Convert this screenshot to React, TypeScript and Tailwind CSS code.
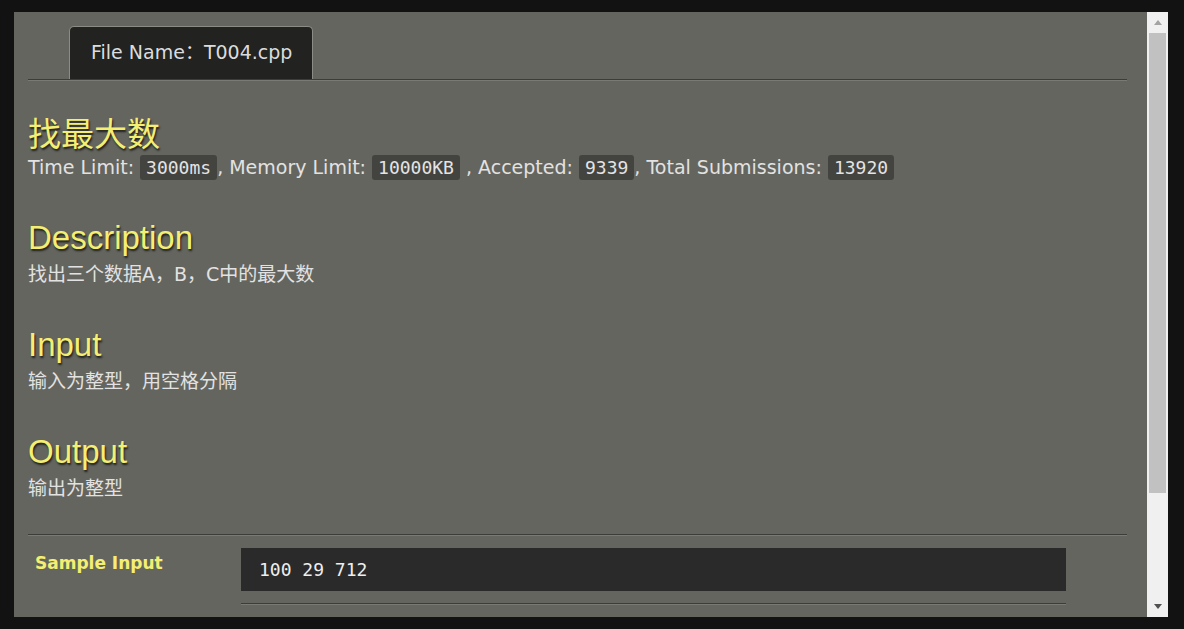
import React from "react"

const sans = "font-['DejaVu_Sans','Noto_Sans_CJK_SC',sans-serif]"
const mono = "font-['DejaVu_Sans_Mono','Liberation_Mono',monospace]"
const heading =
  "text-[33px] leading-[44px] text-[#f4ef72] [text-shadow:1px_2px_2px_#1e1e1e]"

function Code({ children }: { children: React.ReactNode }) {
  return (
    <code className={`${mono} rounded-[3px] bg-[#434340] px-[6px] py-[2px] text-[18px] text-[#e4e4e4]`}>
      {children}
    </code>
  )
}

function Section({ title, text }: { title: string; text: string }) {
  return (
    <div className="mt-[35px]">
      <h2 className={`${heading} font-['Liberation_Sans',sans-serif]`}>{title}</h2>
      <p className={`${sans} text-[19px] leading-[28px] text-[#e2e2e2]`}>{text}</p>
    </div>
  )
}

export default function App() {
  return (
    <div className="flex h-[629px] w-[1184px] bg-[#121212] pb-[12px] pl-[14px] pr-[16px] pt-[12px]">
      <div className="flex-1 overflow-hidden bg-[#65655f] pl-[14px] pr-[20px] pt-[14px]">
        <div className="border-b border-b-[#3c3c3a] shadow-[0_1px_0_#7a7a74]">
          <div
            className={`${sans} ml-[41px] flex h-[53px] w-[244px] items-center rounded-t-[5px] border border-b-0 border-[#8c8c86] bg-[#222221] pb-[1px] pl-[21px] text-[19px] text-[#dcdcdc]`}
          >
            File Name：T004.cpp
          </div>
        </div>

        <div className="mt-[30px]">
          <h1 className={`${heading} font-['Noto_Sans_CJK_SC',sans-serif]`}>找最大数</h1>
          <p className={`${sans} text-[19px] leading-[26px] text-[#e2e2e2]`}>
            Time Limit: <Code>3000ms</Code>, Memory Limit: <Code>10000KB</Code> , Accepted: <Code>9339</Code>, Total
            Submissions: <Code>13920</Code>
          </p>
        </div>

        <div className="mt-[1px]">
          <Section title="Description" text="找出三个数据A，B，C中的最大数" />
          <Section title="Input" text="输入为整型，用空格分隔" />
          <Section title="Output" text="输出为整型" />
        </div>

        <div className="mt-[32px] border-t border-t-[#3c3c3a] shadow-[inset_0_1px_0_#7a7a74]">
          <div className="flex pt-[13px]">
            <div className="w-[213px] pl-[7px] pt-[3px]">
              <span className={`${sans} text-[17px] font-bold text-[#f4ef72]`}>Sample Input</span>
            </div>
            <div className="w-[825px]">
              <pre className={`${mono} h-[43px] bg-[#2a2a2b] px-[18px] pt-[8px] text-[18px] text-[#eeeeee]`}>
                100 29 712
              </pre>
              <div className="mt-[12px] border-t border-t-[#3c3c3a] shadow-[0_1px_0_#7a7a74]" />
            </div>
          </div>
        </div>
      </div>

      <div className="flex w-[21px] flex-col bg-[#f0f0f0]">
        <div className="flex h-[21px] items-center justify-center">
          <div className="h-0 w-0 border-x-[4px] border-b-[5px] border-x-transparent border-b-[#a3a3a3]" />
        </div>
        <div className="mx-[2px] h-[460px] bg-[#c1c1c1]" />
        <div className="flex-1" />
        <div className="flex h-[21px] items-center justify-center">
          <div className="h-0 w-0 border-x-[4px] border-t-[5px] border-x-transparent border-t-[#505050]" />
        </div>
      </div>
    </div>
  )
}
